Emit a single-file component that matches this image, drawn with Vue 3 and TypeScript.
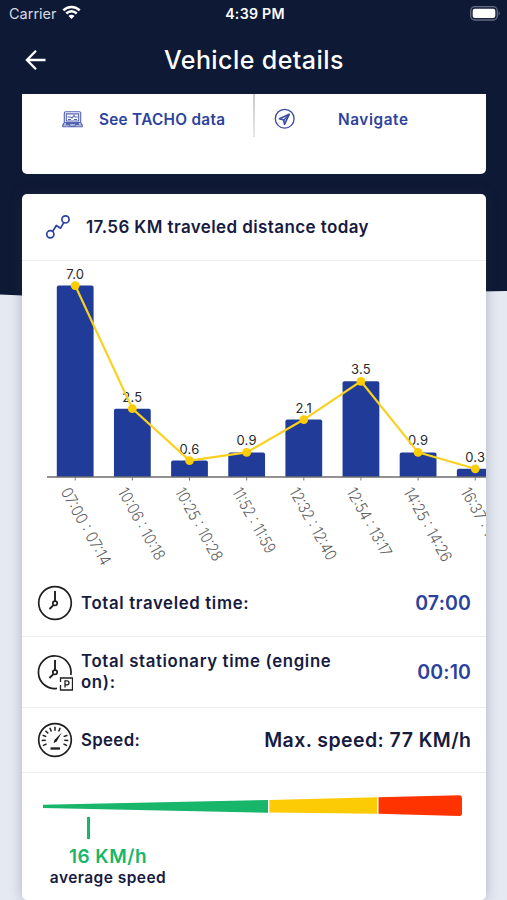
<script setup lang="ts">
interface Trip {
  range: string
  km: number
  length: number
}

const trips: Trip[] = [
  { range: '07:00 : 07:14', km: 7.0, length: 86 },
  { range: '10:06 : 10:18', km: 2.5, length: 80 },
  { range: '10:25 : 10:28', km: 0.6, length: 81 },
  { range: '11:52 : 11:59', km: 0.9, length: 72 },
  { range: '12:32 : 12:40', km: 2.1, length: 80 },
  { range: '12:54 : 13:17', km: 3.5, length: 76 },
  { range: '14:25 : 14:26', km: 0.9, length: 82 },
  { range: '16:37 : 16:45', km: 0.3, length: 82 },
]

const baseline = 216
const kmHeight = 27.35
const barWidth = 36.8

const bars = trips.map((trip, i) => {
  const x = 53.2 + i * 57.15
  const y = baseline - trip.km * kmHeight
  const l = x - barWidth / 2
  const r = x + barWidth / 2
  return {
    ...trip,
    x,
    y,
    shape: `M${l} ${baseline}V${y + 2}q0-2 2-2H${r - 2}q2 0 2 2V${baseline}z`,
  }
})

const line = bars.map((b) => `${b.x},${b.y}`).join(' ')

const speedTicks = [-115, -92, -69, -46, -23, 0, 23, 69, 92, 115]
</script>

<template>
  <div class="screen">
    <svg class="backdrop" viewBox="0 0 507 300" aria-hidden="true">
      <path d="M0 0H507V291Q420 292 330 297Q150 302 0 294.500Z" fill="#0e1935" />
    </svg>

    <header class="top">
      <div class="status">
        <div class="carrier">
          <span>Carrier</span>
          <svg width="19" height="15" viewBox="0 0 19 15">
            <path d="M1.300 5.400a11.500 11.500 0 0 1 16.400 0M4.300 8.500a7.300 7.300 0 0 1 10.400 0" fill="none" stroke="#fff" stroke-width="2.500" />
            <path d="M9.500 14l-3-3a4.200 4.200 0 0 1 6 0z" fill="#fff" />
          </svg>
        </div>
        <span class="clock">4:39 PM</span>
        <svg class="battery" width="31" height="15" viewBox="0 0 31 15">
          <rect x=".7" y=".7" width="26.600" height="13.300" rx="4" fill="#17213d" stroke="#646b80" stroke-width="1.300" />
          <rect x="2.700" y="2.700" width="22.600" height="9.300" rx="2.200" fill="#fff" />
          <path d="M28.700 5q2 2.300 0 4.600z" fill="#747b8e" />
        </svg>
      </div>
      <div class="title-bar">
        <svg width="22" height="22" viewBox="0 0 22 22" fill="none" stroke="#fff" stroke-width="2.300">
          <path d="M20.500 11H2.500M11 1.800L1.900 11l9.100 9.200" />
        </svg>
        <h1>Vehicle details</h1>
      </div>
    </header>

    <section class="actions">
      <div class="action tacho">
        <svg width="21" height="17" viewBox="0 0 21 17" fill="none" stroke="#5362b4" stroke-width="1.100">
          <path d="M2.300 11V2.200q0-1.500 1.500-1.500h13.400q1.500 0 1.500 1.500V11" />
          <path d="M4.300 2.900h12.400V10H4.300zM2.300 11.600h16.400l1.500 2.400v1.800H.8V14zM.8 14h6.700l.5 1h5l.5-1h6.700M4 12.900h13M5.500 6h3l1.500 1 2-2.500 1 1.500h2.700M6 8.500h3m3 0h3" />
        </svg>
        <span>See TACHO data</span>
      </div>
      <i class="split"></i>
      <div class="action nav">
        <svg width="22" height="22" viewBox="0 0 22 22" fill="none" stroke="#3a4ba5" stroke-width="1.300">
          <circle cx="10.700" cy="10.700" r="9.400" />
          <path d="M15.300 6.200L5.400 10.800l4.300 1.300.8 4.300z" stroke-width="1.600" stroke-linejoin="round" />
          <path d="M15.300 6.200l-5.600 6" />
        </svg>
        <span>Navigate</span>
      </div>
    </section>

    <section class="details">
      <div class="heading">
        <svg width="26" height="26" viewBox="0 0 26 26" fill="none" stroke="#2b42a0" stroke-width="1.700" stroke-linejoin="round">
          <circle cx="5.300" cy="20.300" r="3.600" />
          <circle cx="20.500" cy="5.400" r="3.600" />
          <path d="M7.600 17.500l3.700-6 4.300 2.700 3-5.400" />
        </svg>
        <h2>17.56 KM traveled distance today</h2>
      </div>

      <svg class="chart" width="464" height="309" viewBox="0 0 464 309">
        <path v-for="b in bars" :key="b.range" :d="b.shape" fill="#203c98" />
        <path d="M25 216H464" stroke="#6c6c70" stroke-width="1.500" />
        <g v-for="b in bars" :key="b.range">
          <path :d="`M${b.x} 216v3.500`" stroke="#77777b" />
          <text class="km" :x="b.x" :y="b.y - 7" text-anchor="middle">{{ b.km.toFixed(1) }}</text>
          <text
            class="range"
            :transform="`translate(${b.x - 15} 230.500) rotate(61)`"
            :textLength="b.length"
            lengthAdjust="spacingAndGlyphs"
          >{{ b.range }}</text>
        </g>
        <polyline :points="line" fill="none" stroke="#f9d11f" stroke-width="2.200" />
        <circle v-for="b in bars" :key="b.range" :cx="b.x" :cy="b.y" r="4.400" fill="#fccd05" />
      </svg>

      <div class="row traveled">
        <svg width="36" height="36" viewBox="0 0 36 36" fill="none" stroke="#1e1e20">
          <circle cx="18" cy="18" r="16.300" stroke-width="1.700" />
          <path d="M18 6v10M16.200 20.300L12.500 24" stroke-width="1.900" />
          <circle cx="18" cy="18.300" r="2.200" stroke-width="1.700" />
        </svg>
        <span class="label">Total traveled time:</span>
        <span class="value blue">07:00</span>
      </div>

      <div class="row stationary">
        <svg width="36" height="37" viewBox="0 0 36 37" fill="none" stroke="#1e1e20">
          <path d="M33.800 21A16.300 16.300 0 1 0 20 34.400" stroke-width="1.700" />
          <path d="M18 6v10M16.200 20.300L12.500 24" stroke-width="1.900" />
          <circle cx="18" cy="18.300" r="2.200" stroke-width="1.700" />
          <path d="M23.500 28v-4h12v12h-12v-5" stroke-width="1.300" />
          <path d="M28 33.500v-6.700h2q2 0 2 2t-2 2h-2" stroke-width="1.300" />
        </svg>
        <span class="label">Total stationary time (engine<br />on):</span>
        <span class="value blue">00:10</span>
      </div>

      <div class="row speed">
        <svg width="36" height="36" viewBox="0 0 36 36" fill="none" stroke="#1e1e20">
          <circle cx="18" cy="18" r="16.300" stroke-width="1.700" />
          <path v-for="a in speedTicks" :key="a" d="M18 4.700v4" :transform="`rotate(${a} 18 18)`" stroke-width="1.500" />
          <path d="M13.500 26.500h9.500" stroke-width="2.300" />
          <path d="M24.800 10.500l-5.300 9.200-2.900 1.400.8-3.200z" fill="#1e1e20" stroke="none" />
        </svg>
        <span class="label short">Speed:</span>
        <span class="value max">Max. speed: 77 KM/h</span>
      </div>

      <div class="gauge">
        <svg width="420" height="22" viewBox="0 0 420 22">
          <path d="M0 9.800L225 5v12.700L0 13z" fill="#17b66b" />
          <path d="M226.300 5L334 2.300v16.500L226.300 17.600z" fill="#fdcb05" />
          <path d="M335.500 2.300L416 .2q3 0 3 3v15q0 3-3 2.700l-80.500-2.100z" fill="#fe3300" />
        </svg>
        <div class="average">
          <i class="marker"></i>
          <strong>16 KM/h</strong>
          <span>average speed</span>
        </div>
      </div>
    </section>
  </div>
</template>

<style>
body {
  margin: 0;
  background: #e5e9f2;
}
</style>

<style scoped>
.screen {
  position: relative;
  width: 507px;
  height: 900px;
  overflow: hidden;
  background: #e5e9f2;
  color: #171b3f;
  font-family: Inter, "Open Sans", sans-serif;
}
.backdrop {
  position: absolute;
  inset: 0 0 auto;
  width: 507px;
  height: 300px;
}
.top {
  position: relative;
  height: 94px;
  color: #fff;
}
.status {
  display: grid;
  grid-template-columns: 1fr auto 1fr;
  align-items: center;
  height: 28px;
  padding: 0 6px 0 9px;
  font-size: 14.500px;
}
.carrier {
  display: flex;
  align-items: center;
  gap: 6px;
  margin-top: -2px;
  color: #d6dae4;
}
.carrier svg {
  margin: -1px 0 0 -1px;
}
.clock {
  margin-top: -1px;
  font-weight: 600;
  font-size: 14.200px;
  letter-spacing: 0.250px;
}
.battery {
  justify-self: end;
  margin-top: -2px;
}
.title-bar {
  display: flex;
  align-items: center;
  height: 63px;
  padding-left: 25px;
}
h1 {
  margin: 0 0 0 117px;
  font-size: 25px;
  font-weight: 500;
  letter-spacing: 0.420px;
  white-space: nowrap;
}
.actions {
  position: relative;
  display: flex;
  box-sizing: border-box;
  width: 464px;
  height: 80px;
  margin-left: 22px;
  border-radius: 0 0 5px 5px;
  background: #fff;
  color: #2c429d;
  font-size: 15.300px;
  font-weight: 600;
  letter-spacing: 0.300px;
}
.action {
  display: flex;
  align-items: center;
  height: 50px;
  white-space: nowrap;
}
.tacho {
  width: 191px;
  padding-left: 40px;
  gap: 16px;
}
.nav {
  padding-left: 19px;
  gap: 42px;
  letter-spacing: 0.600px;
}
.split {
  width: 2px;
  height: 43px;
  background: linear-gradient(#c8c8cc, #e8e8eb);
}
.details {
  position: relative;
  width: 464px;
  height: 706px;
  margin: 20px 0 0 22px;
  border-radius: 5px;
  background: #fff;
  box-shadow: 0 0 13px rgba(50, 55, 75, 0.300);
}
.heading {
  display: flex;
  align-items: center;
  box-sizing: border-box;
  height: 67px;
  padding-left: 23px;
  gap: 15px;
  border-bottom: 1px solid #eeeef0;
}
h2 {
  margin: 0;
  font-size: 17px;
  font-weight: 600;
  letter-spacing: 0.400px;
  white-space: nowrap;
}
.chart {
  display: block;
}
.km {
  fill: #29292c;
  font-size: 13px;
  letter-spacing: 0.200px;
}
.range {
  fill: #5f5f63;
  font-size: 16px;
  font-weight: 300;
}
.row {
  display: flex;
  align-items: center;
  box-sizing: border-box;
  padding: 0 15px;
  gap: 8px;
  border-bottom: 1px solid #eeeef0;
}
.row svg {
  flex: none;
}
.traveled {
  height: 67px;
}
.stationary {
  height: 71px;
}
.speed {
  height: 65px;
}
.label {
  font-size: 16.800px;
  font-weight: 600;
  letter-spacing: 0.650px;
  line-height: 21px;
  white-space: nowrap;
}
.short {
  letter-spacing: 0.350px;
}
.value {
  margin-left: auto;
  font-size: 19.500px;
  font-weight: 600;
  letter-spacing: 0.200px;
  margin-right: -0.200px;
  white-space: nowrap;
}
.max {
  letter-spacing: 0.430px;
  margin-right: -0.430px;
}
.blue {
  color: #2a429d;
}
.gauge {
  padding: 22px 0 0 21px;
}
.gauge svg {
  display: block;
}
.average {
  display: flex;
  flex-direction: column;
  align-items: center;
  width: 130px;
}
.marker {
  width: 3px;
  height: 22px;
  margin-left: -40px;
  background: #17b66b;
}
.average strong {
  margin-top: 6px;
  color: #17b66b;
  font-size: 19px;
  font-weight: 600;
  letter-spacing: 0.500px;
  line-height: 24px;
}
.average span {
  font-size: 15.500px;
  font-weight: 600;
  letter-spacing: 0.450px;
  line-height: 18px;
}
</style>
